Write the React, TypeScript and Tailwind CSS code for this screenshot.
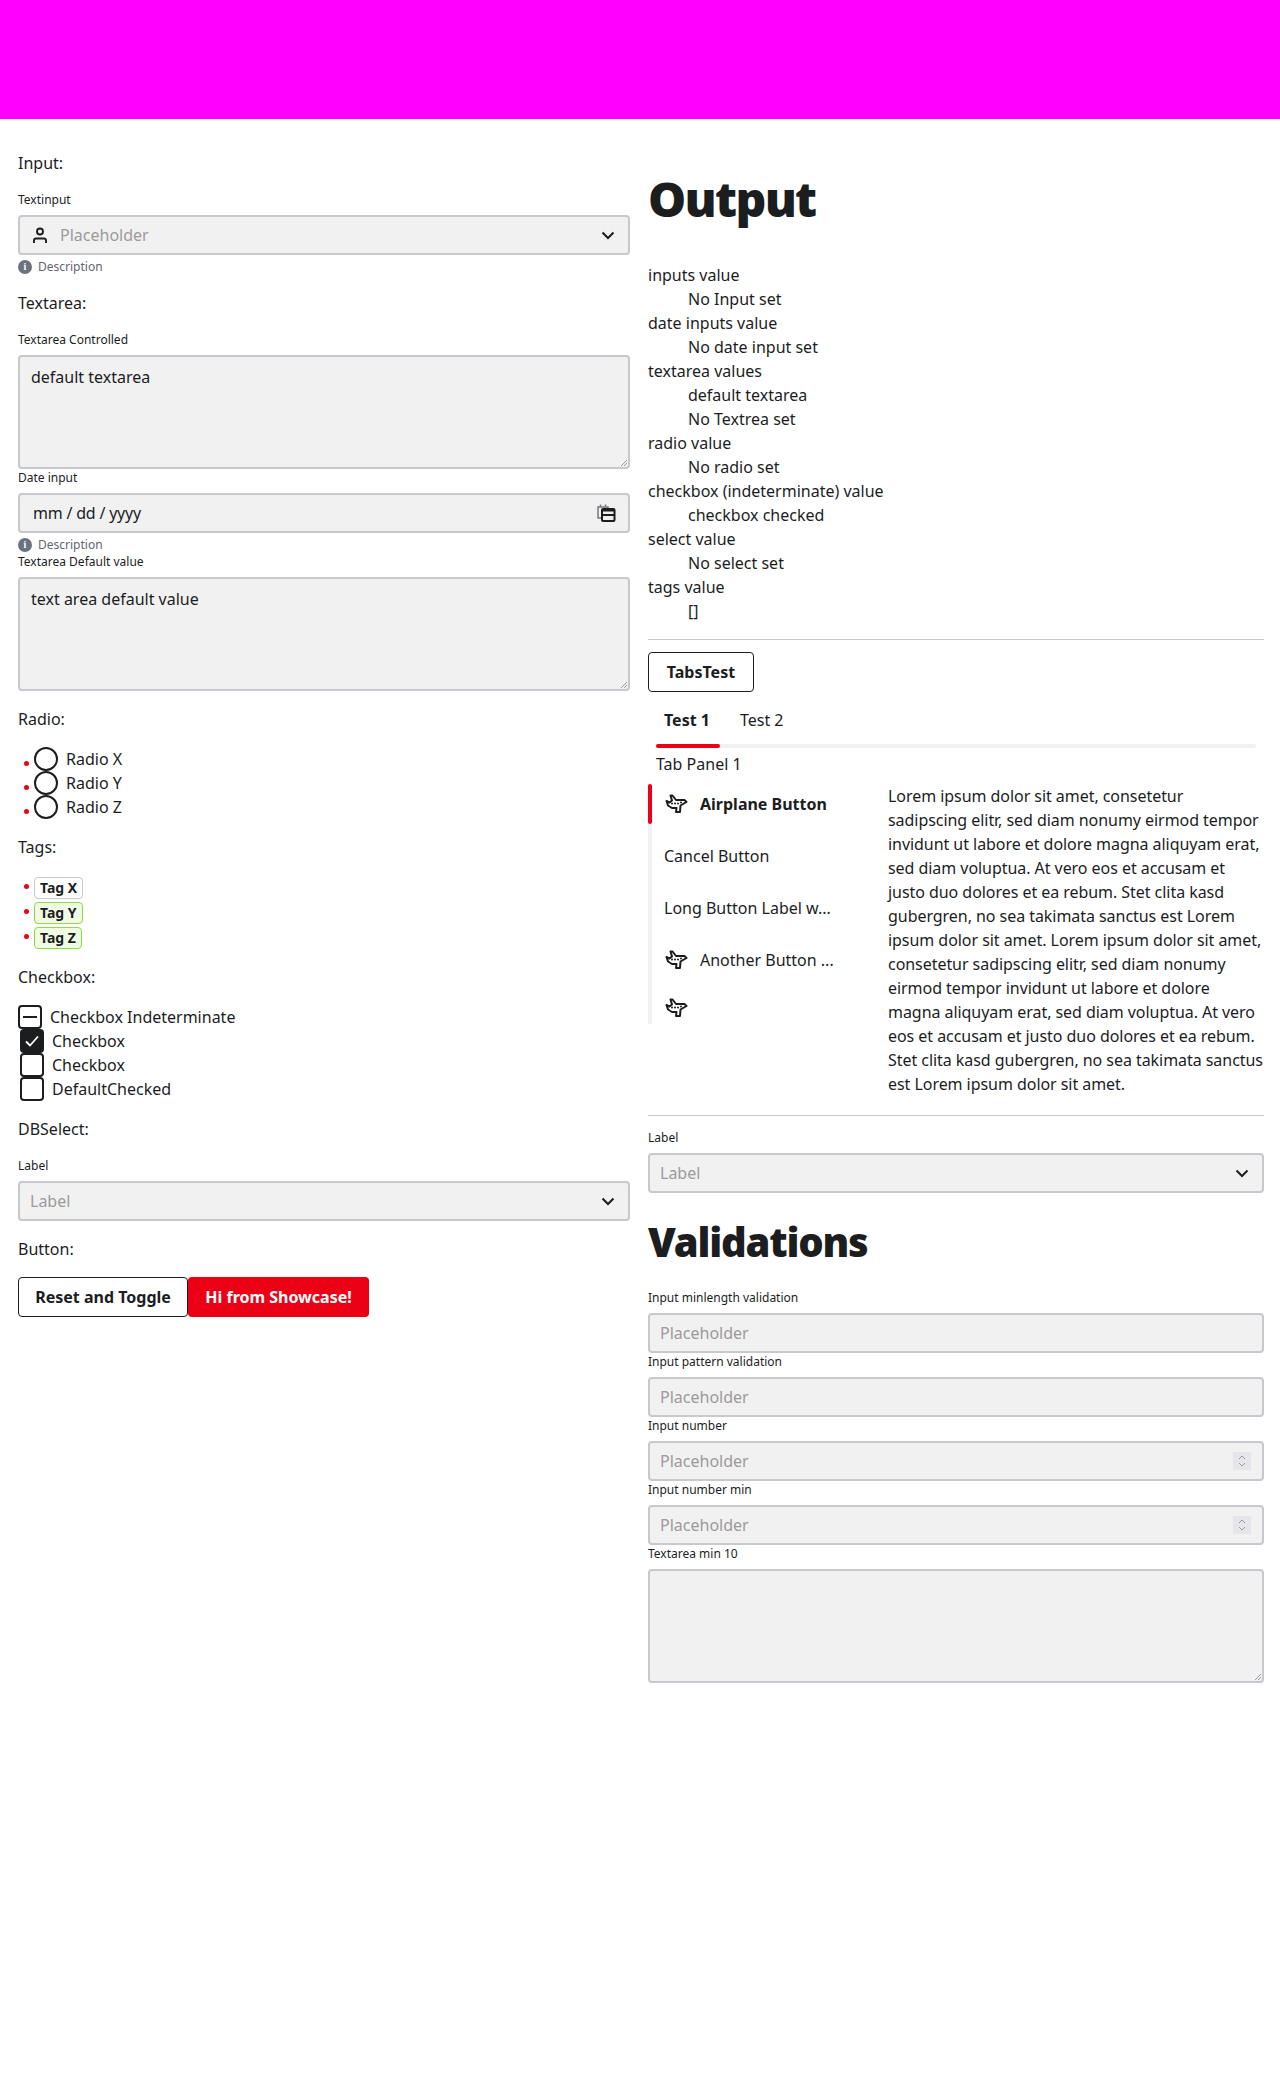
const font = "font-['Noto_Sans','Liberation_Sans',sans-serif]"

function PlaneIcon() {
  return (
    <svg width="24" height="24" viewBox="0 0 24 24" fill="none" stroke="#1c1d1f" strokeWidth="2" strokeLinejoin="round" className="shrink-0">
      <path d="M2.500 9l3 1.500L8 8.500 6.500 3.500l2 0L12 8h8.500l2 2-6 3.500-.5 6.500h-4l.5-4H8l-4-2.500L2.500 9z" />
      <path d="M8 11.500h.01M11 11.500h.01M14 11.500h.01M17 10.500h.01" strokeWidth="2" strokeLinecap="round" />
    </svg>
  )
}

function Chevron() {
  return (
    <svg width="24" height="24" viewBox="0 0 24 24" fill="none" stroke="#1c1d1f" strokeWidth="2" className="shrink-0">
      <path d="M6.500 9.500L12 15l5.500-5.500" />
    </svg>
  )
}

function Label({ text }: { text: string }) {
  return <div className="text-xs leading-4 pt-px mb-[7px]">{text}</div>
}

function Description() {
  return (
    <div className="flex items-center gap-[6px] mt-1 text-xs leading-4 text-[#5f6672]">
      <span className="w-[14px] h-[14px] rounded-full bg-[#6b7280] text-white text-[10px] font-bold leading-[14px] text-center font-['Liberation_Serif',serif]">i</span>
      Description
    </div>
  )
}

function Stepper() {
  return (
    <span className="w-[18px] h-[18px] mr-[3px] bg-[#e6e6ea] flex items-center justify-center">
      <svg width="10" height="14" viewBox="0 0 10 14" fill="none" stroke="#9a9aa2" strokeWidth="1">
        <path d="M2 5l3-3 3 3M2 9l3 3 3-3" />
      </svg>
    </span>
  )
}

function Field({ value, placeholder, right, left }: { value?: string; placeholder?: string; right?: React.ReactNode; left?: React.ReactNode }) {
  return (
    <div className="h-10 rounded border-2 border-[#c8c9ce] bg-[#f1f1f1] flex items-center pl-[10px] pr-2">
      {left}
      <span className={`flex-1 ${value ? 'text-[#1c1d1f] pl-[3px] tracking-[-0.2px]' : 'text-[#9b9b9b]'}`}>{value || placeholder}</span>
      {right}
    </div>
  )
}

function Area({ value }: { value?: string }) {
  return (
    <div className="relative h-[114px] rounded border-2 border-[#c8c9ce] bg-[#f1f1f1] px-[11px] py-[8px]">
      {value}
      <svg width="8" height="8" viewBox="0 0 8 8" stroke="#9a9aa2" className="absolute right-0 bottom-0">
        <path d="M7 1L1 7M7 4L4 7" />
      </svg>
    </div>
  )
}

function Title({ text }: { text: string }) {
  return <p className="my-4 leading-6">{text}</p>
}

function Bullet({ children, top }: { children: React.ReactNode; top: boolean }) {
  return (
    <li className="relative pl-4">
      <span className={`absolute left-[6px] w-[5px] h-[5px] rounded-full bg-[#ec0016] ${top ? 'top-[9px]' : 'top-[14px]'}`} />
      {children}
    </li>
  )
}

function Tag({ text, green }: { text: string; green?: boolean }) {
  return (
    <span className={`inline-block h-[22px] rounded border px-[5px] text-sm font-bold leading-[20px] ${green ? 'border-[#8ddc3f] bg-[#effce3]' : 'border-[#c8c9ce] bg-white'}`}>
      {text}
    </span>
  )
}

function Box({ state }: { state?: 'checked' | 'minus' }) {
  return (
    <span className={`w-6 h-6 rounded border-2 border-[#1c1d1f] flex items-center justify-center shrink-0 ${state === 'checked' ? 'bg-[#1c1d1f]' : 'bg-white'}`}>
      {state === 'checked' && (
        <svg width="18" height="18" viewBox="0 0 18 18" fill="none" stroke="white" strokeWidth="1.8"><path d="M3 9.500l4 4 8-9" /></svg>
      )}
      {state === 'minus' && <span className="w-[14px] h-[2px] bg-[#1c1d1f]" />}
    </span>
  )
}

function Btn({ text, red, width }: { text: string; red?: boolean; width: string }) {
  return (
    <button className={`h-10 rounded font-bold ${width} ${red ? 'bg-[#ec0016] text-white' : 'bg-white border border-[#1c1d1f]'}`}>{text}</button>
  )
}

const outputs: [string, string[]][] = [
  ['inputs value', ['No Input set']],
  ['date inputs value', ['No date input set']],
  ['textarea values', ['default textarea', 'No Textrea set']],
  ['radio value', ['No radio set']],
  ['checkbox (indeterminate) value', ['checkbox checked']],
  ['select value', ['No select set']],
  ['tags value', ['[]']],
]

const lorem =
  'Lorem ipsum dolor sit amet, consetetur sadipscing elitr, sed diam nonumy eirmod tempor invidunt ut labore et dolore magna aliquyam erat, sed diam voluptua. At vero eos et accusam et justo duo dolores et ea rebum. Stet clita kasd gubergren, no sea takimata sanctus est Lorem ipsum dolor sit amet. Lorem ipsum dolor sit amet, consetetur sadipscing elitr, sed diam nonumy eirmod tempor invidunt ut labore et dolore magna aliquyam erat, sed diam voluptua. At vero eos et accusam et justo duo dolores et ea rebum. Stet clita kasd gubergren, no sea takimata sanctus est Lorem ipsum dolor sit amet.'

export default function App() {
  return (
    <div className={`${font} text-base leading-6 text-[#1c1d1f] bg-white min-h-[2100px]`}>
      <div className="h-[119px] bg-[#ff00ff]" />
      <div className="grid grid-cols-[612px_616px] gap-[18px] pl-[18px] pt-4">
        {/* Input column */}
        <div>
          <Title text="Input:" />
          <Label text="Textinput" />
          <Field
            placeholder="Placeholder"
            left={
              <svg width="24" height="24" viewBox="0 0 24 24" fill="none" stroke="#1c1d1f" strokeWidth="1.900" className="mr-2 ml-[-2px] shrink-0">
                <circle cx="12" cy="8.500" r="3" />
                <path d="M6 20v-2.500a2 2 0 0 1 2-2h8a2 2 0 0 1 2 2V20" />
              </svg>
            }
            right={<Chevron />}
          />
          <Description />
          <Title text="Textarea:" />
          <Label text="Textarea Controlled" />
          <Area value="default textarea" />
          <Label text="Date input" />
          <Field
            value="mm / dd / yyyy"
            right={
              <svg width="20" height="20" viewBox="0 0 20 20" fill="none" stroke="#1c1d1f" strokeWidth="2" className="mr-1 shrink-0">
                <path d="M6 15H2V4h10v2M4.500 1.500V4M9.500 1.500V4" stroke="#77787d" strokeWidth="1.500" />
                <rect x="6" y="6" width="12.500" height="12" rx="1" />
                <path d="M6 12h12.500M6 7.500h12.500" />
              </svg>
            }
          />
          <Description />
          <Label text="Textarea Default value" />
          <Area value="text area default value" />
          <Title text="Radio:" />
          <ul>
            {['Radio X', 'Radio Y', 'Radio Z'].map((r) => (
              <Bullet key={r} top={false}>
                <label className="flex items-center gap-2">
                  <span className="w-6 h-6 rounded-full border-2 border-[#1c1d1f] bg-white shrink-0" />
                  {r}
                </label>
              </Bullet>
            ))}
          </ul>
          <Title text="Tags:" />
          <ul className="flex flex-col gap-px mb-px">
            <Bullet top><Tag text="Tag X" /></Bullet>
            <Bullet top><Tag text="Tag Y" green /></Bullet>
            <Bullet top><Tag text="Tag Z" green /></Bullet>
          </ul>
          <Title text="Checkbox:" />
          <div className="flex items-center gap-2"><Box state="minus" />Checkbox Indeterminate</div>
          <div className="flex items-center gap-2 pl-[2px]"><Box state="checked" />Checkbox</div>
          <div className="flex items-center gap-2 pl-[2px]"><Box />Checkbox</div>
          <div className="flex items-center gap-2 pl-[2px]"><Box />DefaultChecked</div>
          <Title text="DBSelect:" />
          <Label text="Label" />
          <Field placeholder="Label" right={<Chevron />} />
          <Title text="Button:" />
          <div className="flex">
            <Btn text="Reset and Toggle" width="w-[170px]" />
            <Btn text="Hi from Showcase!" width="w-[181px]" red />
          </div>
        </div>

        {/* Output column */}
        <div>
          <h1 className="text-5xl leading-[56px] font-black tracking-[-0.035em] mt-9 mb-9">Output</h1>
          <dl>
            {outputs.map(([term, values]) => (
              <div key={term}>
                <dt>{term}</dt>
                {values.map((v) => (
                  <dd key={v} className="ml-10">{v}</dd>
                ))}
              </div>
            ))}
          </dl>
          <hr className="mt-4 mb-3 border-[#c8c9ce]" />
          <Btn text="TabsTest" width="w-[106px]" />
          <div className="mx-2 mt-2">
            <div className="flex gap-[30px] px-2 h-10 items-center">
              <span className="font-bold">Test 1</span>
              <span>Test 2</span>
            </div>
            <div className="h-1 mt-1 bg-[#f1f1f1] rounded">
              <div className="w-16 h-1 bg-[#ec0016] rounded" />
            </div>
            <div className="mt-1 leading-6">Tab Panel 1</div>
          </div>
          <div className="flex gap-6 mt-2">
            <div className="w-[216px] h-[240px] shrink-0 border-l-4 border-[#f1f1f1] relative">
              <span className="absolute -left-1 top-0 w-1 h-10 bg-[#ec0016] rounded" />
              <div className="flex flex-col gap-3 pl-3">
                <div className="h-10 flex items-center gap-3 font-bold"><PlaneIcon /><span>Airplane Button</span></div>
                <div className="h-10 flex items-center">Cancel Button</div>
                <div className="h-10 flex items-center">Long Button Label w...</div>
                <div className="h-10 flex items-center gap-3"><PlaneIcon /><span>Another Button ...</span></div>
                <div className="h-8 flex items-center"><PlaneIcon /></div>
              </div>
            </div>
            <p className="tracking-[-0.05px]">{lorem}</p>
          </div>
          <hr className="mt-[19px] mb-[13px] border-[#c8c9ce]" />
          <Label text="Label" />
          <Field placeholder="Label" right={<Chevron />} />
          <h1 className="text-[40px] leading-[48px] font-black tracking-[-0.03em] mt-[25px] mb-[23px]">Validations</h1>
          <Label text="Input minlength validation" />
          <Field placeholder="Placeholder" />
          <Label text="Input pattern validation" />
          <Field placeholder="Placeholder" />
          <Label text="Input number" />
          <Field placeholder="Placeholder" right={<Stepper />} />
          <Label text="Input number min" />
          <Field placeholder="Placeholder" right={<Stepper />} />
          <Label text="Textarea min 10" />
          <Area />
        </div>
      </div>
    </div>
  )
}
